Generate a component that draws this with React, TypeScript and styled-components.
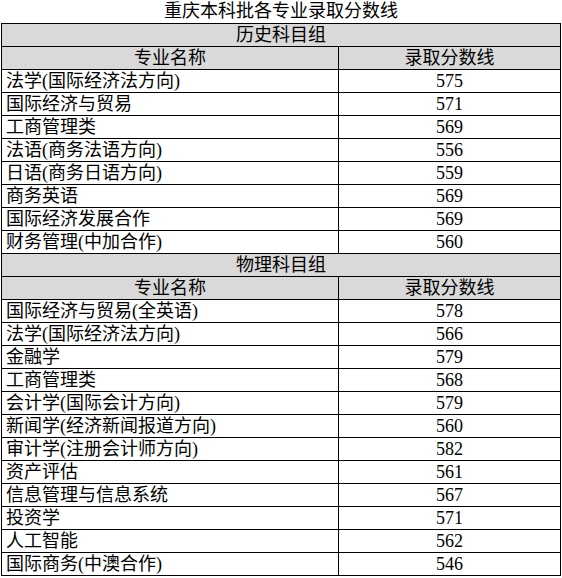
import React from 'react';
import styled, { createGlobalStyle } from 'styled-components';

const GlobalStyle = createGlobalStyle`
  html, body {
    margin: 0;
    padding: 0;
    background: #ffffff;
  }
  body {
    font-family: 'Liberation Serif', 'Noto Sans CJK SC', serif;
    color: #000000;
  }
`;

const Page = styled.div`
  width: 562px;
  padding-left: 1px;
  box-sizing: border-box;
`;

const Title = styled.div`
  height: 23px;
  line-height: 22px;
  text-align: center;
  font-size: 18px;
  width: 560px;
`;

const Table = styled.table`
  width: 560px;
  border-collapse: collapse;
  table-layout: fixed;
  font-size: 18px;
`;

const Cell = styled.td<{ $align?: 'left' | 'center'; $shade?: boolean }>`
  border: 1px solid #000000;
  height: 23px;
  padding: 0 0 0 ${(p) => (p.$align === 'left' ? '4px' : '0')};
  line-height: 21px;
  text-align: ${(p) => p.$align || 'center'};
  background: ${(p) => (p.$shade ? '#d9d9d9' : '#ffffff')};
  white-space: nowrap;
  overflow: hidden;
  box-sizing: border-box;
`;

type Group = {
  name: string;
  rows: [string, number][];
};

const groups: Group[] = [
  {
    name: '历史科目组',
    rows: [
      ['法学(国际经济法方向)', 575],
      ['国际经济与贸易', 571],
      ['工商管理类', 569],
      ['法语(商务法语方向)', 556],
      ['日语(商务日语方向)', 559],
      ['商务英语', 569],
      ['国际经济发展合作', 569],
      ['财务管理(中加合作)', 560],
    ],
  },
  {
    name: '物理科目组',
    rows: [
      ['国际经济与贸易(全英语)', 578],
      ['法学(国际经济法方向)', 566],
      ['金融学', 579],
      ['工商管理类', 568],
      ['会计学(国际会计方向)', 579],
      ['新闻学(经济新闻报道方向)', 560],
      ['审计学(注册会计师方向)', 582],
      ['资产评估', 561],
      ['信息管理与信息系统', 567],
      ['投资学', 571],
      ['人工智能', 562],
      ['国际商务(中澳合作)', 546],
    ],
  },
];

const App: React.FC = () => {
  return (
    <>
      <GlobalStyle />
      <Page>
        <Title>重庆本科批各专业录取分数线</Title>
        <Table>
          <colgroup>
            <col style={{ width: 337 }} />
            <col />
          </colgroup>
          <tbody>
            {groups.map((g) => (
              <React.Fragment key={g.name}>
                <tr>
                  <Cell colSpan={2} $shade>
                    {g.name}
                  </Cell>
                </tr>
                <tr>
                  <Cell $shade>专业名称</Cell>
                  <Cell $shade>录取分数线</Cell>
                </tr>
                {g.rows.map(([major, score]) => (
                  <tr key={major}>
                    <Cell $align="left">{major}</Cell>
                    <Cell>{score}</Cell>
                  </tr>
                ))}
              </React.Fragment>
            ))}
          </tbody>
        </Table>
      </Page>
    </>
  );
};

export default App;
